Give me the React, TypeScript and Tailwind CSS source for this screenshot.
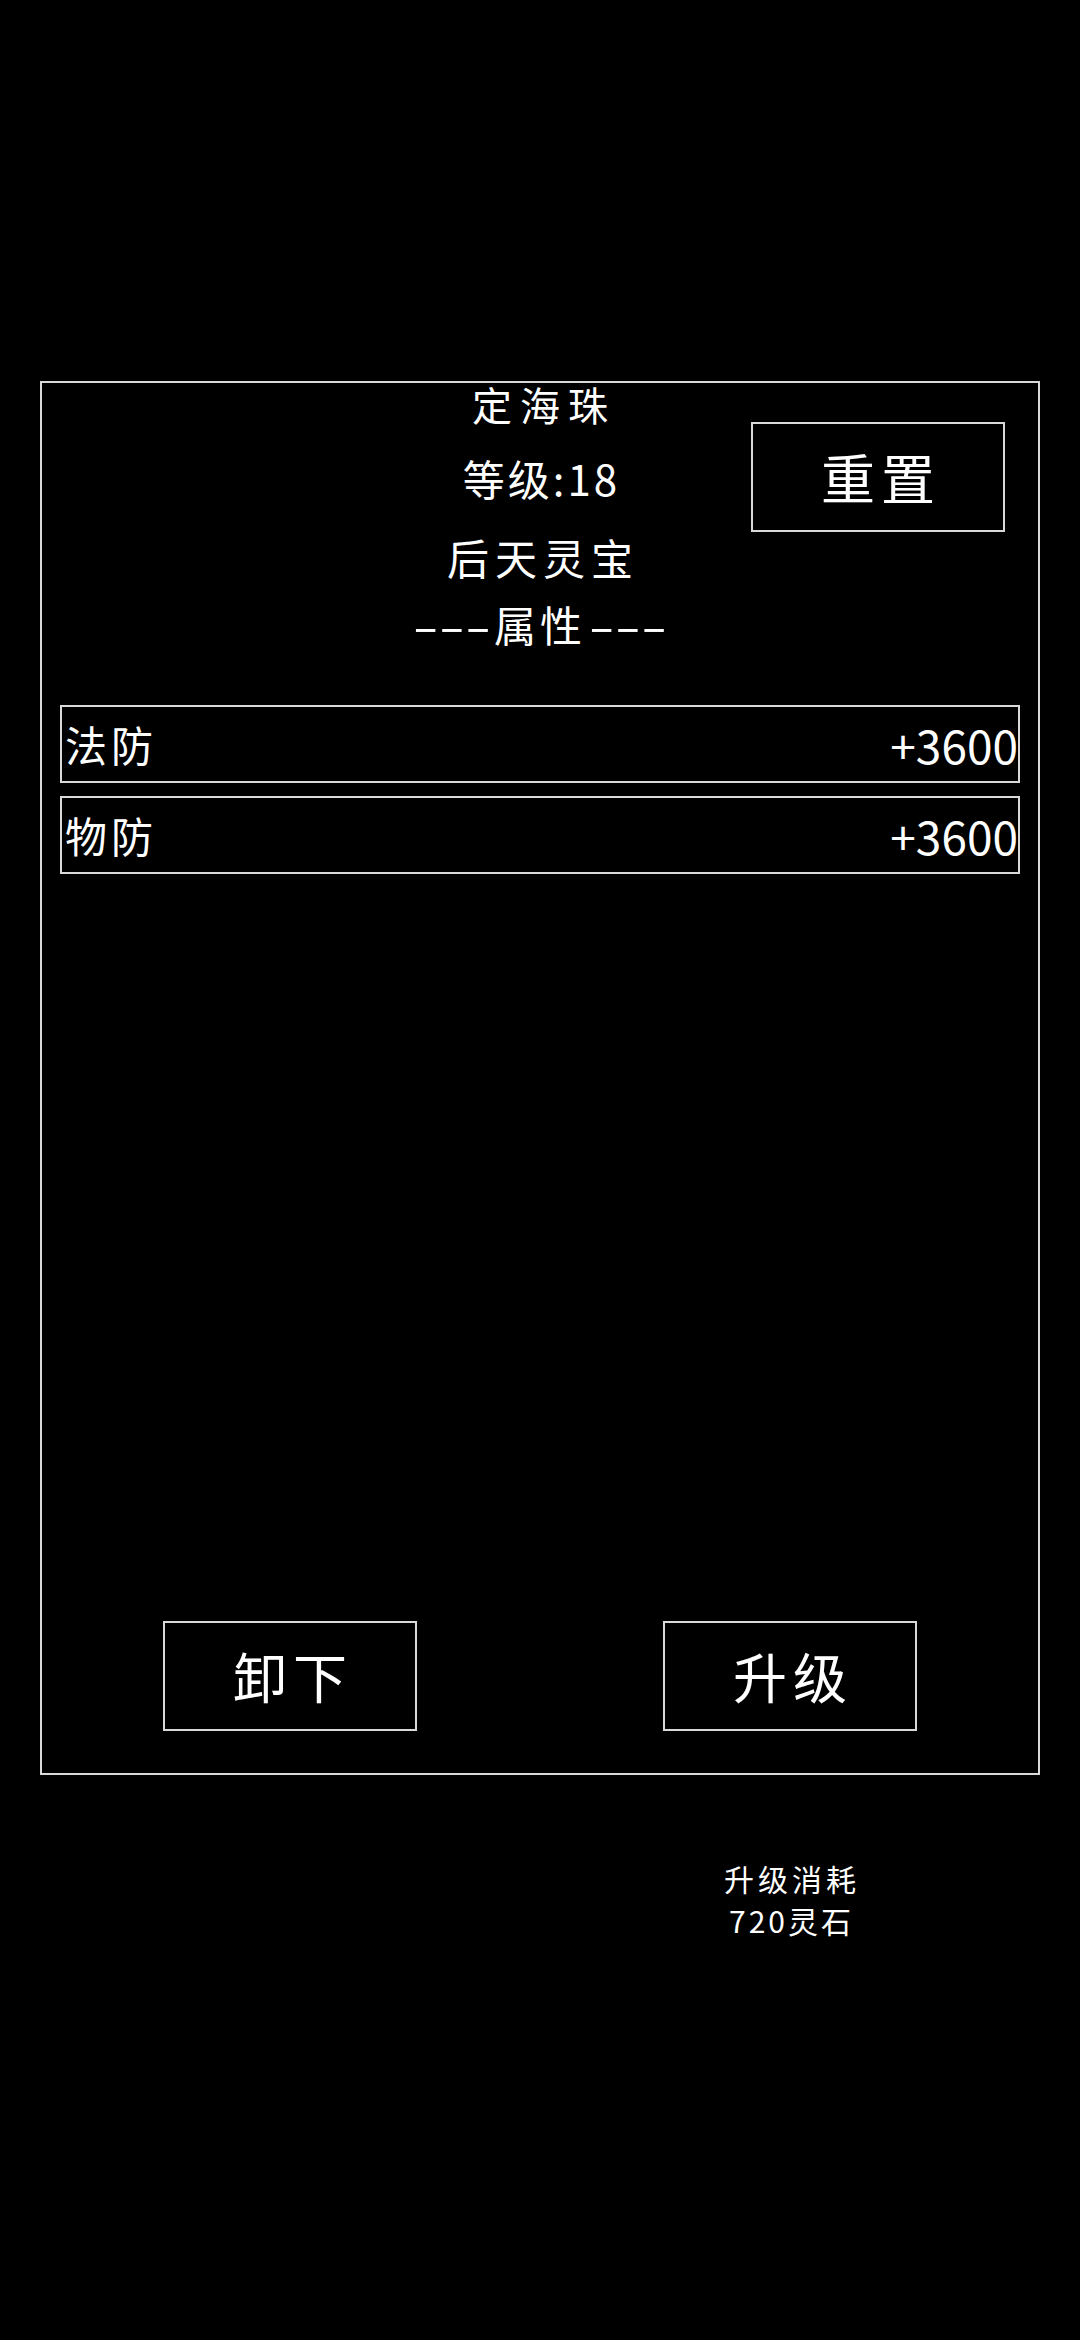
import React from "react";

const FONT = { fontFamily: '"Noto Sans CJK SC", "Noto Sans", sans-serif' };

function StatRow({ label, value }: { label: string; value: string }) {
  return (
    <div className="flex h-[78px] items-center justify-between border-2 border-[#d9d9d9] pl-[3px] pr-0">
      <span className="text-[42px] leading-none tracking-[4px] text-white">{label}</span>
      <span className="text-[46px] leading-none text-white">{value}</span>
    </div>
  );
}

function BigButton({ label }: { label: string }) {
  return (
    <button className="flex h-[110px] w-[254px] items-center justify-center border-2 border-[#d9d9d9] bg-black text-[54px] leading-none tracking-[6px] text-white">
      <span className="pl-[6px]">{label}</span>
    </button>
  );
}

function Dashes() {
  return <span className="mx-[16px] inline-block origin-center scale-x-[1.8]">---</span>;
}

export default function App() {
  return (
    <div className="min-h-[2340px] w-[1080px] bg-black pt-[381px] text-white" style={FONT}>
      <div className="mx-[40px] flex h-[1394px] w-[1000px] flex-col border-2 border-[#d9d9d9]">
        {/* header */}
        <div className="grid grid-cols-[minmax(0,1fr)_auto_minmax(0,1fr)]">
          <div />
          <div className="flex flex-col items-center">
            <div className="flex h-[42px] items-center text-[40px] leading-none tracking-[8px] pl-[8px]">定海珠</div>
            <div className="flex h-[106px] items-center text-[42px] leading-none tracking-[3px] pl-[3px]">等级:18</div>
            <div className="flex h-[52px] items-center text-[42px] leading-none tracking-[6px] pl-[6px]">后天灵宝</div>
            <div className="flex h-[82px] items-center text-[42px] leading-none">
              <Dashes />
              <span className="mx-[4px] tracking-[4px]">属性</span>
              <Dashes />
            </div>
          </div>
          <div className="flex items-start justify-end pr-[33px] pt-[39px]">
            <BigButton label="重置" />
          </div>
        </div>

        {/* stats */}
        <div className="mt-[40px] flex flex-col gap-[13px] px-[18px]">
          <StatRow label="法防" value="+3600" />
          <StatRow label="物防" value="+3600" />
        </div>

        <div className="flex-1" />

        {/* actions */}
        <div className="flex justify-between px-[121px] pb-[42px]">
          <BigButton label="卸下" />
          <BigButton label="升级" />
        </div>
      </div>

      {/* cost */}
      <div className="mx-[40px] mt-[82px] flex w-[1000px] justify-end pr-[123px]">
        <div className="flex w-[254px] flex-col items-center text-[30px] leading-[42px] text-white">
          <span className="tracking-[4px] pl-[4px]">升级消耗</span>
          <span className="tracking-[3px] pl-[3px]">720灵石</span>
        </div>
      </div>
    </div>
  );
}
